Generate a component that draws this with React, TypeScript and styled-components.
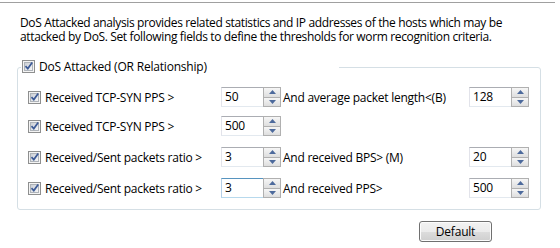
import React from "react";
import styled, { createGlobalStyle } from "styled-components";

const GlobalStyle = createGlobalStyle`
  html, body { margin: 0; padding: 0; background: #ffffff; }
  body {
    font-family: "Open Sans", "Noto Sans", "Liberation Sans", sans-serif;
    font-size: 12px;
    color: #000000;
  }
`;

const Page = styled.div`
  width: 560px;
  height: 248px;
  overflow: hidden;
  background: #ffffff;
`;

const TopRule = styled.div`
  margin-top: 2px;
  width: 555px;
  height: 1px;
  background: #a0a0a0;
`;

const Description = styled.p`
  margin: 13px 0 0 20px;
  width: 530px;
  line-height: 14px;
  letter-spacing: -0.36px;
  white-space: nowrap;
`;

const GroupBox = styled.div`
  position: relative;
  box-sizing: border-box;
  margin: 23px 0 0 17px;
  width: 524px;
  height: 143px;
  border: 1px solid #d5dfe5;
  border-radius: 3px;
  padding: 19px 0 0 10px;
`;

const Legend = styled.div`
  position: absolute;
  top: -8px;
  left: 3px;
  width: 317px;
  height: 12px;
  background: #ffffff;
  display: flex;
  align-items: center;
  gap: 4px;
  padding-left: 1px;
  letter-spacing: -0.2px;
`;

const Row = styled.div<{ $space: number }>`
  display: grid;
  grid-template-columns: 193px 60px 188px 60px;
  align-items: center;
  height: 20px;
  margin-top: ${(p) => p.$space}px;
`;

const CheckLabel = styled.label`
  display: flex;
  align-items: center;
  gap: 4px;
  letter-spacing: -0.25px;
  white-space: nowrap;
`;

const SideLabel = styled.span`
  padding-left: 2px;
  letter-spacing: -0.25px;
  white-space: nowrap;
`;

const BoxOuter = styled.span`
  box-sizing: border-box;
  width: 13px;
  height: 13px;
  border: 1px solid #8e8f8f;
  background: #f4f4f4;
  padding: 1px;
  display: inline-flex;
  flex: none;
`;

const BoxInner = styled.span`
  box-sizing: border-box;
  width: 9px;
  height: 9px;
  border: 1px solid #aeb3b9;
  background: linear-gradient(135deg, #cbcfd5 0%, #e4e6ea 60%, #f6f6f6 100%);
  position: relative;
  display: block;
`;

const CheckMark = styled.svg`
  position: absolute;
  left: -1px;
  top: -2px;
`;

const CheckBox: React.FC = () => (
  <BoxOuter>
    <BoxInner>
      <CheckMark width="10" height="10" viewBox="0 0 10 10">
        <path d="M1.5 5.2 L3.8 7.6 L8.2 1.6" fill="none" stroke="#3c5a96" strokeWidth="1.7" />
      </CheckMark>
    </BoxInner>
  </BoxOuter>
);

const Spin = styled.div<{ $focused?: boolean }>`
  box-sizing: border-box;
  width: 60px;
  height: 20px;
  display: flex;
  border: 1px solid;
  border-color: ${(p) =>
    p.$focused ? "#5794bf #c5daed #b7d9ed #b5cfe7" : "#abadb3 #e3e9ef #e3e9ef #e2e3ea"};
  background: #ffffff;
`;

const SpinValue = styled.span`
  flex: 1;
  padding-left: 3px;
  line-height: 17px;
  letter-spacing: -0.2px;
`;

const SpinButtons = styled.div`
  box-sizing: border-box;
  width: 18px;
  margin: -1px -1px -1px 0;
  display: flex;
  flex-direction: column;
  border: 1px solid #b0b0b0;
  background: #b0b0b0;
  gap: 1px;
`;

const SpinButton = styled.div`
  flex: 1;
  display: flex;
  align-items: center;
  justify-content: center;
  background: linear-gradient(#f6f6f6, #dedede);
`;

const Arrow: React.FC<{ down?: boolean }> = ({ down }) => (
  <svg width="7" height="4" viewBox="0 0 7 4">
    <path d={down ? "M0 0 H7 L3.5 4 Z" : "M0 4 H7 L3.5 0 Z"} fill="#4d6a9c" />
  </svg>
);

const SpinBox: React.FC<{ value: string; focused?: boolean }> = ({ value, focused }) => (
  <Spin $focused={focused}>
    <SpinValue>{value}</SpinValue>
    <SpinButtons>
      <SpinButton>
        <Arrow />
      </SpinButton>
      <SpinButton>
        <Arrow down />
      </SpinButton>
    </SpinButtons>
  </Spin>
);

const Footer = styled.div`
  display: flex;
  margin: 11px 0 0 419px;
`;

const Button = styled.button`
  box-sizing: border-box;
  width: 73px;
  height: 21px;
  border: 1px solid #707070;
  border-radius: 3px;
  background: linear-gradient(#f2f2f2 0%, #ebebeb 50%, #dddddd 50%, #cfcfcf 100%);
  box-shadow: inset 0 0 0 1px #fcfcfc;
  font-family: inherit;
  font-size: 12px;
  color: #000;
  padding: 0;
  letter-spacing: -0.2px;
`;

type RowData = {
  label: string;
  value: string;
  focused?: boolean;
  space: number;
  side?: string;
  sideValue?: string;
};

const rows: RowData[] = [
  { label: "Received TCP-SYN PPS >", value: "50", space: 0, side: "And average packet length<(B)", sideValue: "128" },
  { label: "Received TCP-SYN PPS >", value: "500", space: 9 },
  { label: "Received/Sent packets ratio >", value: "3", space: 11, side: "And received BPS> (M)", sideValue: "20" },
  { label: "Received/Sent packets ratio >", value: "3", focused: true, space: 11, side: "And received PPS>", sideValue: "500" },
];

export default function App() {
  return (
    <Page>
      <GlobalStyle />
      <TopRule />
      <Description>
        DoS Attacked analysis provides related statistics and IP addresses of the hosts which may be
        <br />
        attacked by DoS. Set following fields to define the thresholds for worm recognition criteria.
      </Description>
      <GroupBox>
        <Legend>
          <CheckBox />
          <span>DoS Attacked (OR Relationship)</span>
        </Legend>
        {rows.map((r, i) => (
          <Row key={i} $space={r.space}>
            <CheckLabel>
              <CheckBox />
              {r.label}
            </CheckLabel>
            <SpinBox value={r.value} focused={r.focused} />
            {r.side ? <SideLabel>{r.side}</SideLabel> : <span />}
            {r.sideValue ? <SpinBox value={r.sideValue} /> : <span />}
          </Row>
        ))}
      </GroupBox>
      <Footer>
        <Button>Default</Button>
      </Footer>
    </Page>
  );
}
